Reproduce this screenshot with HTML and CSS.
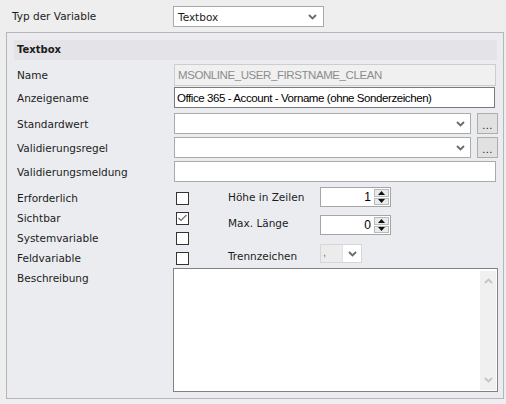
FILE: index.html
```html
<!DOCTYPE html>
<html lang="de">
<head>
<meta charset="utf-8">
<title>Typ der Variable</title>
<link rel="stylesheet" href="styles.css">
</head>
<body>
<div class="top">
  <span class="top-label">Typ der Variable</span>
  <div class="select top-select">
    <span class="select-text">Textbox</span>
    <svg class="chev" width="9" height="6" viewBox="0 0 9 6"><polyline points="1,1 4.5,4.5 8,1" fill="none" stroke="#6a6a6a" stroke-width="1.8"/></svg>
  </div>
</div>

<div class="panel">
  <div class="panel-head">Textbox</div>

  <div class="row row-name">
    <span class="lbl">Name</span>
    <div class="field field-disabled">MSONLINE_USER_FIRSTNAME_CLEAN</div>
  </div>

  <div class="row row-display">
    <span class="lbl">Anzeigename</span>
    <div class="field field-focus">Office 365 - Account - Vorname (ohne Sonderzeichen)</div>
  </div>

  <div class="row row-gap5">
    <span class="lbl">Standardwert</span>
    <div class="combo">
      <svg class="chev" width="9" height="6" viewBox="0 0 9 6"><polyline points="1,1 4.5,4.5 8,1" fill="none" stroke="#6a6a6a" stroke-width="1.8"/></svg>
    </div>
    <div class="dots-btn">...</div>
  </div>

  <div class="row row-gap3">
    <span class="lbl">Validierungsregel</span>
    <div class="combo">
      <svg class="chev" width="9" height="6" viewBox="0 0 9 6"><polyline points="1,1 4.5,4.5 8,1" fill="none" stroke="#6a6a6a" stroke-width="1.8"/></svg>
    </div>
    <div class="dots-btn">...</div>
  </div>

  <div class="row row-gap3">
    <span class="lbl">Validierungsmeldung</span>
    <div class="field"></div>
  </div>

  <div class="options">
    <div class="checks">
      <div class="check-row">
        <span class="lbl">Erforderlich</span>
        <span class="box"></span>
      </div>
      <div class="check-row">
        <span class="lbl">Sichtbar</span>
        <span class="box">
          <svg width="11" height="11" viewBox="0 0 11 11"><polyline points="1.5,5 4,7.5 9.5,2" fill="none" stroke="#6e6e6e" stroke-width="1.2"/></svg>
        </span>
      </div>
      <div class="check-row">
        <span class="lbl">Systemvariable</span>
        <span class="box"></span>
      </div>
      <div class="check-row">
        <span class="lbl">Feldvariable</span>
        <span class="box"></span>
      </div>
    </div>

    <div class="props">
      <div class="prop-row">
        <span class="plbl">Höhe in Zeilen</span>
        <div class="spin">
          <span class="spin-val">1</span>
          <div class="spin-btns">
            <span class="spin-btn"><svg width="7" height="4" viewBox="0 0 7 4"><polygon points="0,4 3.5,0 7,4" fill="#111"/></svg></span>
            <span class="spin-btn"><svg width="7" height="4" viewBox="0 0 7 4"><polygon points="0,0 3.5,4 7,0" fill="#111"/></svg></span>
          </div>
        </div>
      </div>
      <div class="prop-row prop-row-2">
        <span class="plbl plbl-up">Max. Länge</span>
        <div class="spin">
          <span class="spin-val">0</span>
          <div class="spin-btns">
            <span class="spin-btn"><svg width="7" height="4" viewBox="0 0 7 4"><polygon points="0,4 3.5,0 7,4" fill="#111"/></svg></span>
            <span class="spin-btn"><svg width="7" height="4" viewBox="0 0 7 4"><polygon points="0,0 3.5,4 7,0" fill="#111"/></svg></span>
          </div>
        </div>
      </div>
      <div class="prop-row prop-row-3">
        <span class="plbl plbl-down">Trennzeichen</span>
        <div class="sep-combo">
          <span class="sep-val">,</span>
          <span class="sep-arrow">
            <svg width="9" height="6" viewBox="0 0 9 6"><polyline points="1,1 4.5,4.5 8,1" fill="none" stroke="#6a6a6a" stroke-width="1.8"/></svg>
          </span>
        </div>
      </div>
    </div>
  </div>

  <div class="row row-desc">
    <span class="lbl lbl-desc">Beschreibung</span>
    <div class="memo">
      <div class="memo-body"></div>
      <div class="scrollbar">
        <svg width="9" height="6" viewBox="0 0 9 6"><polyline points="1,5 4.5,1.5 8,5" fill="none" stroke="#c4c4c4" stroke-width="1.8"/></svg>
        <svg width="9" height="6" viewBox="0 0 9 6"><polyline points="1,1 4.5,4.5 8,1" fill="none" stroke="#c4c4c4" stroke-width="1.8"/></svg>
      </div>
    </div>
  </div>
</div>
</body>
</html>
```

FILE: styles.css
```css
* {
  box-sizing: border-box;
}

body {
  margin: 0;
  background: #eeeeee;
  font-family: "DejaVu Sans", "Liberation Sans", sans-serif;
  font-size: 10.5px;
  color: #1c1c1c;
}

/* top row */
.top {
  display: flex;
  height: 32px;
}

.top-label {
  width: 173px;
  padding-left: 12px;
  margin-top: 6px;
  line-height: 21px;
}

.select {
  display: flex;
  align-items: center;
  background: #ffffff;
  border: 1px solid #a9a9a9;
}

.top-select {
  margin-top: 6px;
  width: 151px;
  height: 21px;
  padding: 0 6px 0 4px;
}

.select-text {
  flex: 1;
}

.chev {
  display: block;
  flex-shrink: 0;
}

/* panel */
.panel {
  margin-left: 6px;
  width: 498px;
  height: 367px;
  border: 1px solid #b6b6b6;
  background: #ebecf0;
  padding: 7px 6px 0 7px;
}

.panel-head {
  height: 20px;
  line-height: 20px;
  background: #e3e3e8;
  font-weight: bold;
  font-size: 10px;
  padding-left: 3px;
}

.row {
  display: flex;
  align-items: center;
  height: 21px;
  margin-top: 3px;
}

.row-name {
  margin-top: 4px;
  height: 22px;
}

.row-display {
  margin-top: 1px;
}

.row-gap5 {
  margin-top: 5px;
}

.row-gap3 {
  margin-top: 3px;
}

.lbl {
  width: 160px;
  flex-shrink: 0;
  padding-left: 3px;
}

.field {
  flex: 1;
  height: 100%;
  margin-right: 1px;
  background: #ffffff;
  border: 1px solid #ababab;
  padding: 0 3px;
  display: flex;
  align-items: center;
  font-family: "Liberation Sans", Arial, sans-serif;
  font-size: 11.5px;
  letter-spacing: -0.42px;
  color: #000000;
  white-space: nowrap;
  overflow: hidden;
}

.field-disabled {
  background: #f0f0f0;
  border-color: #cdcdcd;
  color: #8c8c8c;
}

.field-focus {
  border-color: #7a7a7a;
  margin-right: 2px;
  padding-left: 2px;
}

.combo {
  width: 297px;
  height: 100%;
  flex-shrink: 0;
  background: #ffffff;
  border: 1px solid #ababab;
  display: flex;
  align-items: center;
  justify-content: flex-end;
  padding-right: 5px;
}

.dots-btn {
  width: 21px;
  height: 100%;
  flex-shrink: 0;
  margin-left: 6px;
  background: #e1e1e1;
  border: 1px solid #adadad;
  font-family: "Liberation Sans", Arial, sans-serif;
  font-size: 11px;
  text-align: center;
  line-height: 22px;
  letter-spacing: 0.5px;
}

/* options block */
.options {
  display: flex;
  margin-top: 5px;
  height: 81px;
}

.checks {
  width: 175px;
  flex-shrink: 0;
  padding-top: 1px;
}

.check-row {
  display: flex;
  align-items: center;
  height: 20px;
}

.box {
  width: 13px;
  height: 13px;
  margin-left: 2px;
  background: #ffffff;
  border: 1px solid #333333;
  display: flex;
  align-items: center;
  justify-content: center;
}

.box svg {
  display: block;
}

.props {
  margin-left: 39px;
}

.prop-row {
  display: flex;
  align-items: center;
  height: 20px;
}

.prop-row-2 {
  margin-top: 8px;
}

.prop-row-3 {
  margin-top: 9px;
  height: 19px;
}

.plbl {
  width: 92px;
  flex-shrink: 0;
}

.plbl-up {
  padding-bottom: 4px;
}

.plbl-down {
  padding-top: 5px;
}

.spin {
  width: 71px;
  height: 20px;
  background: #ffffff;
  border: 1px solid #a5a5a5;
  display: flex;
  padding: 1px 1px 1px 0;
}

.spin-val {
  flex: 1;
  text-align: right;
  padding-right: 3px;
  font-family: "Liberation Sans", Arial, sans-serif;
  font-size: 12px;
  line-height: 16px;
  color: #000000;
}

.spin-btns {
  width: 15px;
  display: flex;
  flex-direction: column;
  gap: 1px;
}

.spin-btn {
  flex: 1;
  background: #eaeaea;
  border: 1px solid #b9b9b9;
  display: flex;
  align-items: center;
  justify-content: center;
}

.spin-btn svg {
  display: block;
}

.sep-combo {
  width: 42px;
  height: 19px;
  border: 1px solid #d6d6d6;
  background: #ffffff;
  display: flex;
}

.sep-val {
  width: 22px;
  background: #ececec;
  border-right: 1px solid #e2e2e2;
  font-family: "Liberation Sans", Arial, sans-serif;
  font-size: 11px;
  color: #777777;
  padding-left: 2px;
  line-height: 15px;
}

.sep-arrow {
  flex: 1;
  display: flex;
  align-items: center;
  justify-content: center;
}

/* description */
.row-desc {
  margin-top: 0;
  height: 124px;
  align-items: flex-start;
}

.lbl-desc {
  line-height: 20px;
  width: 159px;
}

.memo {
  width: 325px;
  height: 124px;
  flex-shrink: 0;
  background: #ffffff;
  border: 1px solid #828282;
  display: flex;
  padding: 2px 1px 1px 0;
}

.memo-body {
  flex: 1;
}

.scrollbar {
  width: 16px;
  background: #f0f0f0;
  display: flex;
  flex-direction: column;
  align-items: center;
  justify-content: space-between;
  padding: 7px 0 7px;
}

.scrollbar svg {
  display: block;
}
```
